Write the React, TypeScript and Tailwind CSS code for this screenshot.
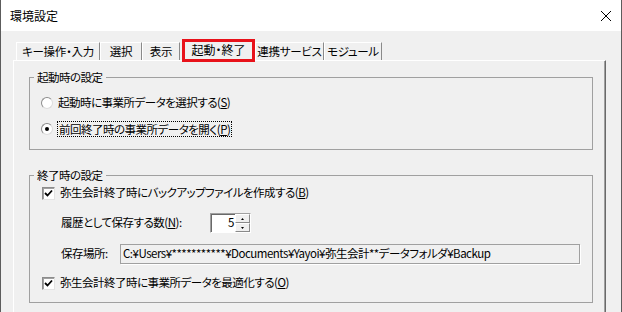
const jp = "font-['Noto_Sans_CJK_JP',sans-serif] [font-feature-settings:'palt']";

function Radio({ checked }: { checked?: boolean }) {
  return (
    <span className="flex h-[12px] w-[12px] shrink-0 items-center justify-center rounded-full border border-t-[#8c8c8c] border-l-[#8c8c8c] border-b-[#dcdcdc] border-r-[#dcdcdc] bg-white">
      {checked && <span className="h-[4px] w-[4px] rounded-full bg-black" />}
    </span>
  );
}

function Check() {
  return (
    <span className="flex h-[13px] w-[13px] shrink-0 items-center justify-center border border-t-[#8c8c8c] border-l-[#8c8c8c] border-b-[#e3e3e3] border-r-[#e3e3e3] bg-white shadow-[inset_1px_1px_0_#a0a0a0]">
      <svg width="9" height="9" viewBox="0 0 9 9">
        <path d="M1 4 L3.5 6.5 L8 1.5" fill="none" stroke="#000" strokeWidth="1.8" />
      </svg>
    </span>
  );
}

const tabs = [
  { label: "キー操作・入力", w: "w-[84px]" },
  { label: "選択", w: "w-[42px]" },
  { label: "表示", w: "w-[38px]" },
];
const tabsAfter = [
  { label: "連携サービス", w: "w-[69px]" },
  { label: "モジュール", w: "w-[58px]" },
];

function Tab({ label, w }: { label: string; w: string }) {
  return (
    <div className={`${w} flex h-[18px] shrink-0 items-center justify-center whitespace-nowrap border-l border-t border-white border-r border-r-[#8a8a8a] text-[11.5px] leading-none tracking-[-0.3px] text-black`}>
      {label}
    </div>
  );
}

export default function App() {
  return (
    <div className={`${jp} flex h-[312px] w-[622px] flex-col overflow-hidden border-x border-[#5c5c5c] bg-white text-[11.5px] tracking-[-0.5px] text-black`}>
      <div className="flex h-[31px] shrink-0 items-center justify-between pl-[9px] pr-[9px]">
        <span className="text-[12px] tracking-normal">環境設定</span>
        <svg width="12" height="12" viewBox="0 0 12 12">
          <path d="M1 1 L11 11 M11 1 L1 11" stroke="#000" strokeWidth="1" />
        </svg>
      </div>

      <div className="flex flex-1 flex-col bg-[#f0f0f0] pl-[12px] pr-[15px] pt-[7px]">
        <div className="relative z-10 flex h-[22px] items-end pl-[3px]">
          {tabs.map((t) => (
            <Tab key={t.label} {...t} />
          ))}
          <div className="mb-[-2px] ml-[2px] flex h-[23px] w-[73px] shrink-0 items-center justify-center whitespace-nowrap border-[3px] border-[#e8121a] bg-[#f0f0f0] pb-[1px] text-[12px] leading-none tracking-normal">
            起動・終了
          </div>
          {tabsAfter.map((t) => (
            <Tab key={t.label} {...t} />
          ))}
        </div>

        <div className="h-[270px] shrink-0 border-l border-t border-white border-r border-r-[#6a6a6a] pl-[15px] pr-[12px] shadow-[inset_-1px_0_0_#a0a0a0]">
          <fieldset className="mt-[8px] border border-[#a0a0a0] pb-[12px] pl-[11px] pt-[10px]">
            <legend className="ml-[-7px] px-[3px] leading-[16px]">起動時の設定</legend>
            <div className="flex h-[16px] items-center gap-[5px]">
              <Radio />
              <span>
                起動時に事業所データを選択する(<span className="underline">S</span>)
              </span>
            </div>
            <div className="mt-[10px] flex h-[16px] items-center gap-[4px]">
              <Radio checked />
              <span className="border border-dotted border-black px-[1px] leading-[14px]">
                前回終了時の事業所データを開く(<span className="underline">P</span>)
              </span>
            </div>
          </fieldset>

          <fieldset className="mt-[17px] border border-[#a0a0a0] pb-[11px] pl-[12px] pt-[2px]">
            <legend className="ml-[-8px] px-[3px] leading-[16px]">終了時の設定</legend>
            <div className="flex h-[16px] items-center gap-[5px]">
              <Check />
              <span>
                弥生会計終了時にバックアップファイルを作成する(<span className="underline">B</span>)
              </span>
            </div>

            <div className="ml-[19px] mt-[12px] flex h-[20px] items-center">
              <span className="w-[149px]">
                履歴として保存する数(<span className="underline">N</span>):
              </span>
              <div className="flex h-[20px] w-[41px] border border-t-[#a0a0a0] border-l-[#a0a0a0] border-b-white border-r-white bg-white shadow-[inset_1px_1px_0_#696969]">
                <span className="flex flex-1 items-center justify-end pr-[1px] leading-none">5</span>
                <div className="flex w-[15px] flex-col">
                  {[0, 1].map((i) => (
                    <div
                      key={i}
                      className="flex flex-1 items-center justify-center border border-t-white border-l-white border-b-[#8a8a8a] border-r-[#8a8a8a] bg-[#f0f0f0]"
                    >
                      <svg width="3" height="2" viewBox="0 0 3 2">
                        <path d={i === 0 ? "M1.5 0 L3 2 L0 2 Z" : "M0 0 L3 0 L1.5 2 Z"} fill="#000" />
                      </svg>
                    </div>
                  ))}
                </div>
              </div>
            </div>

            <div className="ml-[19px] mt-[11px] flex h-[20px] items-center">
              <span className="w-[59px]">保存場所:</span>
              <div className="flex h-[20px] w-[460px] items-center border border-[#a0a0a0] bg-[#f0f0f0] pl-[2px] shadow-[1px_1px_0_#fff]">
                C:¥Users¥***********¥Documents¥Yayoi¥弥生会計**データフォルダ¥Backup
              </div>
            </div>

            <div className="mt-[11px] flex h-[16px] items-center gap-[5px]">
              <Check />
              <span>
                弥生会計終了時に事業所データを最適化する(<span className="underline">O</span>)
              </span>
            </div>
          </fieldset>
        </div>
      </div>
    </div>
  );
}
